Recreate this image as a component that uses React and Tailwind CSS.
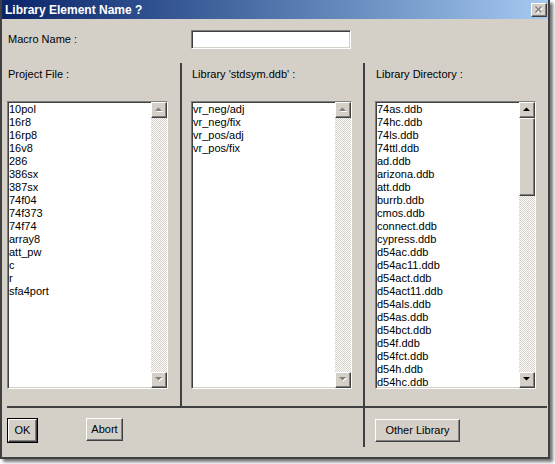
import React from "react";

const raised =
  "border border-t-white border-l-white border-r-[#404040] border-b-[#404040] shadow-[inset_-1px_-1px_#808080,inset_1px_1px_#d4d0c8] bg-[#d4d0c8]";
const sunken =
  "border border-t-[#808080] border-l-[#808080] border-r-white border-b-white shadow-[inset_1px_1px_#404040,inset_-1px_-1px_#d4d0c8]";
const checker =
  "bg-[image:repeating-conic-gradient(#d4d0c8_0%_25%,#ffffff_0%_50%)] bg-[length:2px_2px]";

function Arrow({ dir, enabled }) {
  const pts = dir === "up" ? "0,4 7,4 3.5,0.5" : "0,0 7,0 3.5,3.5";
  return (
    <svg width="9" height="6" viewBox="0 0 9 6">
      {!enabled && (
        <polygon points={pts} transform="translate(1,1)" fill="#ffffff" />
      )}
      <polygon points={pts} fill={enabled ? "#000000" : "#808080"} />
    </svg>
  );
}

function ScrollBtn({ dir, enabled }) {
  return (
    <div className={`${raised} w-4 h-4 shrink-0 flex items-center justify-center`}>
      <Arrow dir={dir} enabled={enabled} />
    </div>
  );
}

function ListBox({ items, enabled }) {
  return (
    <div className={`${sunken} bg-white w-[161px] h-[288px] flex`}>
      <div className="flex-1 overflow-hidden pl-[1px] pt-[1px]">
        {items.map((it) => (
          <div key={it} className="h-[13px] leading-[13px] text-[11px] text-black whitespace-nowrap">
            {it}
          </div>
        ))}
      </div>
      <div className="w-4 flex flex-col">
        <ScrollBtn dir="up" enabled={enabled} />
        {enabled ? (
          <div className="flex-1 flex flex-col">
            <div className={`${raised} h-[78px] shrink-0`} />
            <div className={`flex-1 ${checker}`} />
          </div>
        ) : (
          <div className={`flex-1 ${checker}`} />
        )}
        <ScrollBtn dir="down" enabled={enabled} />
      </div>
    </div>
  );
}

function Button({ children, width, isDefault }) {
  const btn = (
    <div
      className={`${raised} h-[23px] flex items-center justify-center text-[11px] text-black`}
      style={{ width }}
    >
      {children}
    </div>
  );
  if (isDefault) {
    return <div className="border border-black">{btn}</div>;
  }
  return btn;
}

const projectFiles = [
  "10pol", "16r8", "16rp8", "16v8", "286", "386sx", "387sx", "74f04", "74f373",
  "74f74", "array8", "att_pw", "c", "r", "sfa4port",
];
const libraryItems = ["vr_neg/adj", "vr_neg/fix", "vr_pos/adj", "vr_pos/fix"];
const dirItems = [
  "74as.ddb", "74hc.ddb", "74ls.ddb", "74ttl.ddb", "ad.ddb", "arizona.ddb",
  "att.ddb", "burrb.ddb", "cmos.ddb", "connect.ddb", "cypress.ddb", "d54ac.ddb",
  "d54ac11.ddb", "d54act.ddb", "d54act11.ddb", "d54als.ddb", "d54as.ddb",
  "d54bct.ddb", "d54f.ddb", "d54fct.ddb", "d54h.ddb", "d54hc.ddb",
];

export default function App() {
  return (
    <div
      className="w-[555px] h-[464px] bg-white overflow-hidden"
      style={{ fontFamily: '"Liberation Sans", Arial, sans-serif' }}
    >
      <div className="w-[550px] h-[459px] bg-[#d4d0c8] border-x-2 border-b-2 border-[#404040] shadow-[3px_3px_3px_rgba(0,0,0,0.55)] flex flex-col">
        {/* Title bar */}
        <div className="h-[19px] shrink-0 bg-gradient-to-r from-[#0a246a] to-[#a6caf0] flex items-center justify-between pl-[3px] pr-[1px]">
          <span className="text-white font-bold text-[12px] leading-none">
            Library Element Name ?
          </span>
          <div className={`${raised} w-[16px] h-[14px] flex items-center justify-center`}>
            <svg width="9" height="8" viewBox="0 0 9 8">
              <g transform="translate(1,1)" stroke="#ffffff" strokeWidth="1.4">
                <line x1="0.5" y1="0.5" x2="6.5" y2="6.5" />
                <line x1="6.5" y1="0.5" x2="0.5" y2="6.5" />
              </g>
              <g stroke="#808080" strokeWidth="1.4">
                <line x1="0.5" y1="0.5" x2="6.5" y2="6.5" />
                <line x1="6.5" y1="0.5" x2="0.5" y2="6.5" />
              </g>
            </svg>
          </div>
        </div>

        {/* Macro row */}
        <div className="flex items-center mt-[11px] pl-[6px]">
          <div className="w-[183px] text-[11px] text-black">Macro Name :</div>
          <div className={`${sunken} bg-white w-[160px] h-[19px]`} />
        </div>

        {/* Main area */}
        <div className="flex mt-[14px]">
          {/* Left part */}
          <div className="w-[361px] flex flex-col">
            <div className="flex h-[343px]">
              <div className="w-[178px] pl-[5px] pt-[5px]">
                <div className="pl-[1px] h-[13px] leading-[13px] text-[11px] text-black">Project File :</div>
                <div className="mt-[20px]">
                  <ListBox items={projectFiles} enabled={false} />
                </div>
              </div>
              <div className="w-[2px] bg-[#404040]" />
              <div className="w-[181px] pl-[9px] pt-[5px]">
                <div className="pl-[1px] h-[13px] leading-[13px] text-[11px] text-black">Library 'stdsym.ddb' :</div>
                <div className="mt-[20px]">
                  <ListBox items={libraryItems} enabled={false} />
                </div>
              </div>
            </div>
            <div className="ml-[5px] h-[2px] bg-[#404040]" />
            <div className="h-[39px] pl-[5px] pt-[10px] flex items-start gap-[48px]">
              <Button width={29} isDefault>OK</Button>
              <Button width={37}>Abort</Button>
            </div>
          </div>

          {/* Divider */}
          <div className="w-[2px] h-[384px] bg-[#404040]" />

          {/* Right part */}
          <div className="w-[183px] flex flex-col">
            <div className="h-[343px] pl-[10px] pt-[5px]">
              <div className="pl-[1px] h-[13px] leading-[13px] text-[11px] text-black">Library Directory :</div>
              <div className="mt-[20px]">
                <ListBox items={dirItems} enabled={true} />
              </div>
            </div>
            <div className="mr-[1px] h-[2px] bg-[#404040]" />
            <div className="h-[39px] pl-[10px] pt-[11px] flex items-start">
              <Button width={85}>Other Library</Button>
            </div>
          </div>
        </div>
      </div>
    </div>
  );
}
